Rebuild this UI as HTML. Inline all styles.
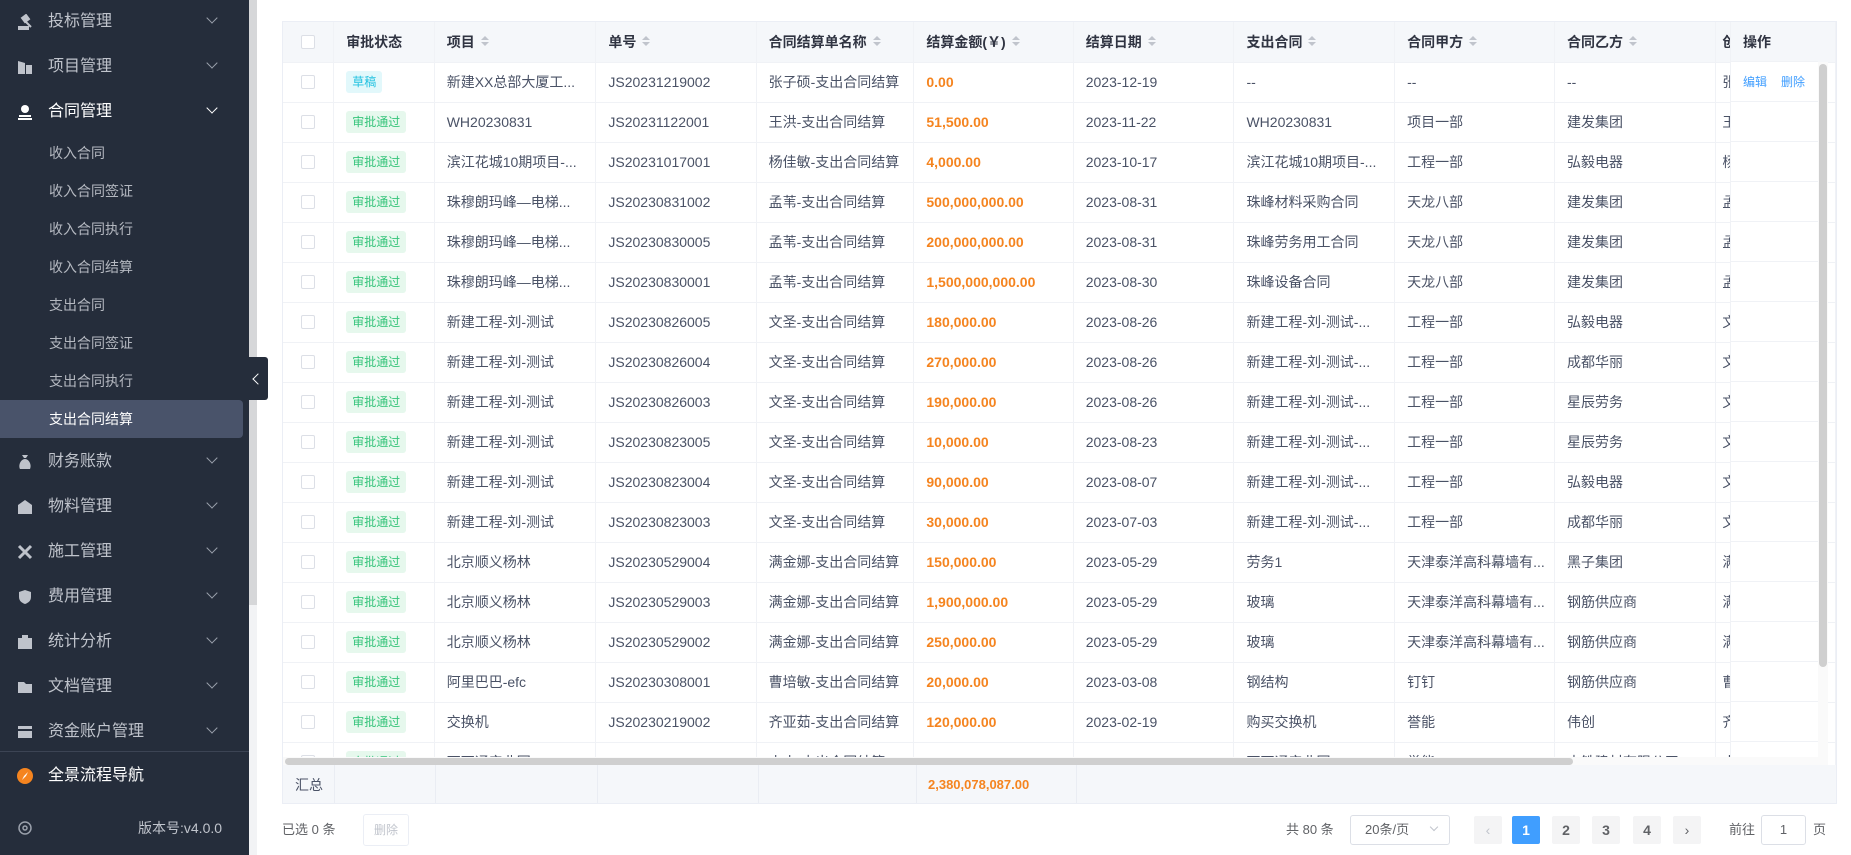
<!DOCTYPE html>
<html><head><meta charset="utf-8"><style>
*{margin:0;padding:0;box-sizing:border-box}
body{width:1851px;height:855px;overflow:hidden;background:#fff;font-family:"Liberation Sans","Noto Sans CJK SC",sans-serif;color:#4a5266;position:relative}
.sb{position:absolute;left:0;top:0;width:249px;height:855px;background:#252d3b}
.sbs{position:absolute;left:249px;top:0;width:8px;height:855px;background:#f2f3f5}
.sbs i{position:absolute;left:0;top:0;width:8px;height:605px;background:#d6d7d9}
.mi{position:absolute;left:0;width:249px;height:44px;color:#c0c4cc;font-size:16px;line-height:44px}
.mi .ic{position:absolute;left:17px;top:14px;width:16px;height:16px}
.mi .t{position:absolute;left:48px}
.mi .ar{position:absolute;left:208px;top:14px;width:8px;height:8px;border-right:1.5px solid #9aa0ab;border-bottom:1.5px solid #9aa0ab;transform:rotate(45deg)}
.sub{position:absolute;left:0;width:243px;height:38px;line-height:38px;padding-left:49px;font-size:14px;color:#b4b8c0}
.sub.on{background:#49536a;color:#fff;border-radius:0 4px 4px 0}
.coll{position:absolute;left:249px;top:357px;width:19px;height:43px;background:#252d3b;border-radius:0 3px 3px 0}
.coll:after{content:"";position:absolute;left:5px;top:18px;width:7px;height:7px;border-left:1.5px solid #fff;border-bottom:1.5px solid #fff;transform:rotate(45deg)}
.tw{position:absolute;left:282px;top:21px;width:1555px;height:783px;border:1px solid #ebeef5;overflow:hidden}
table{border-collapse:collapse;table-layout:fixed;position:absolute;left:0;top:0}
td,th{height:40px;border-right:1px solid #f0f2f6;border-bottom:1px solid #f0f2f6;font-size:14px;padding-left:12px;white-space:nowrap;overflow:hidden;text-align:left}
td:nth-child(11),th:nth-child(11){padding-left:6px}
th{background:#f5f7fa;color:#303442;font-weight:bold;height:40px}
th .s{display:inline-block;width:0;height:0;margin-left:6px;border:4px solid transparent;border-bottom-color:#c0c4cc;position:relative;top:-7px}
th .s:after{content:"";position:absolute;left:-4px;top:6px;border:4px solid transparent;border-top-color:#c0c4cc}
.cb{padding-left:18px}.cb i{display:block;width:14px;height:14px;border:1px solid #dcdfe6;border-radius:2px;background:#fff}
.tg{display:inline-block;height:22px;line-height:22px;padding:0 6px;font-size:12px;border-radius:3px;background:#e6f8ed;color:#35c47a}
.tg.d{background:#e2f8fb;color:#20c1e0}
.am{color:#f5841f;font-weight:bold}
.ops{position:absolute;left:1447px;top:0;width:88px;height:735px;background:#fff;border-left:1px solid #f0f2f6}
.ops div{height:40px;border-bottom:1px solid #f0f2f6;font-size:12px;line-height:40px;padding-left:12px;color:#409eff}
.ops .h{background:#f5f7fa;font-size:14px;font-weight:bold;color:#303442}
.vs{position:absolute;left:1535px;top:40px;width:10px;height:743px;background:#fafafa}
.vs i{position:absolute;left:1px;top:2px;width:8px;height:603px;background:#cfcfcf;border-radius:4px}
.hs{position:absolute;left:0;top:735px;width:1545px;height:8px;background:#fafafa}
.hs i{position:absolute;left:2px;top:1px;width:1288px;height:7px;background:#cfcfcf;border-radius:4px}
.sum{position:absolute;left:0;top:743px;width:1555px;height:40px;background:#f5f7fa;font-size:14px;line-height:40px}
.pg{position:absolute;top:816px;height:28px;line-height:28px;font-size:13px}
.pb{position:absolute;top:816px;width:28px;height:28px;background:#f4f4f5;text-align:center;line-height:28px;font-size:14px;font-weight:bold;color:#606266;border-radius:2px}
</style></head><body>
<div class="sb">
<div class="mi" style="top:0"><svg class="ic" viewBox="0 0 16 16"><path d="M2 13h9v2H2zM5 4l4-3 3 4-4 3zM8 7l6 6" stroke="#bfc3cb" stroke-width="2" fill="#bfc3cb"/></svg><span class="t">投标管理</span><i class="ar"></i></div>
<div class="mi" style="top:45px"><svg class="ic" viewBox="0 0 16 16"><path d="M1 15V2l7 2v11zM9 6h6v9H9z" fill="#bfc3cb"/></svg><span class="t">项目管理</span><i class="ar"></i></div>
<div class="mi" style="top:90px;color:#fff"><svg class="ic" viewBox="0 0 16 16"><circle cx="8" cy="5" r="4" fill="#fff"/><path d="M2 11h12v2H2zM1 14h14v2H1z" fill="#fff"/></svg><span class="t">合同管理</span><i class="ar" style="border-color:#fff"></i></div>
<div class="sub" style="top:134px">收入合同</div>
<div class="sub" style="top:172px">收入合同签证</div>
<div class="sub" style="top:210px">收入合同执行</div>
<div class="sub" style="top:248px">收入合同结算</div>
<div class="sub" style="top:286px">支出合同</div>
<div class="sub" style="top:324px">支出合同签证</div>
<div class="sub" style="top:362px">支出合同执行</div>
<div class="sub on" style="top:400px">支出合同结算</div>
<div class="mi" style="top:440px"><svg class="ic" viewBox="0 0 16 16"><path d="M5 1h6l-2 3h-2zM3 15c-2-4 1-10 5-10s7 6 5 10z" fill="#bfc3cb"/></svg><span class="t">财务账款</span><i class="ar"></i></div>
<div class="mi" style="top:485px"><svg class="ic" viewBox="0 0 16 16"><path d="M1 6l7-5 7 5v9H1z" fill="#bfc3cb"/></svg><span class="t">物料管理</span><i class="ar"></i></div>
<div class="mi" style="top:530px"><svg class="ic" viewBox="0 0 16 16"><path d="M2 2l12 12M14 2L2 14" stroke="#bfc3cb" stroke-width="3"/></svg><span class="t">施工管理</span><i class="ar"></i></div>
<div class="mi" style="top:575px"><svg class="ic" viewBox="0 0 16 16"><path d="M8 1l6 2v5c0 4-3 6-6 7-3-1-6-3-6-7V3z" fill="#bfc3cb"/></svg><span class="t">费用管理</span><i class="ar"></i></div>
<div class="mi" style="top:620px"><svg class="ic" viewBox="0 0 16 16"><path d="M1 4h14v11H1zM5 1h6v3H5z" fill="#bfc3cb"/></svg><span class="t">统计分析</span><i class="ar"></i></div>
<div class="mi" style="top:665px"><svg class="ic" viewBox="0 0 16 16"><path d="M1 3h6l2 2h6v9H1z" fill="#bfc3cb"/></svg><span class="t">文档管理</span><i class="ar"></i></div>
<div class="mi" style="top:710px"><svg class="ic" viewBox="0 0 16 16"><path d="M1 2h14v12H1z" fill="#bfc3cb"/><path d="M1 6h14" stroke="#252d3b" stroke-width="2"/></svg><span class="t">资金账户管理</span><i class="ar"></i></div>
<div style="position:absolute;left:0;top:751px;width:249px;height:1px;background:#3c4454"></div>
<div class="mi" style="top:754px;color:#fff"><svg class="ic" viewBox="0 0 16 16"><circle cx="8" cy="8" r="8" fill="#f5841f"/><path d="M11 4L7 8 5 12 9 8z" fill="#fff"/></svg><span class="t">全景流程导航</span></div>
<div class="mi" style="top:806px;font-size:14px"><svg class="ic" viewBox="0 0 16 16"><circle cx="8" cy="8" r="6" fill="none" stroke="#9aa0ab" stroke-width="1.5"/><circle cx="8" cy="8" r="2" fill="none" stroke="#9aa0ab" stroke-width="1.5"/></svg><span class="t" style="left:138px">版本号:v4.0.0</span></div>
</div>
<div class="sbs"><i></i></div>
<div class="coll"></div>

<div class="tw">
<table>
<colgroup><col style="width:51px"><col style="width:101px"><col style="width:162px"><col style="width:161px"><col style="width:158px"><col style="width:160px"><col style="width:162px"><col style="width:161px"><col style="width:160px"><col style="width:162px"><col style="width:18px"><col style="width:100px"></colgroup>
<tr><th class="cb"><i></i></th><th>审批状态</th><th>项目<span class="s"></span></th><th>单号<span class="s"></span></th><th>合同结算单名称<span class="s"></span></th><th>结算金额(￥)<span class="s"></span></th><th>结算日期<span class="s"></span></th><th>支出合同<span class="s"></span></th><th>合同甲方<span class="s"></span></th><th>合同乙方<span class="s"></span></th><th>创</th><th></th></tr>
<tr><td class="cb"><i></i></td><td><span class="tg d">草稿</span></td><td>新建XX总部大厦工...</td><td>JS20231219002</td><td>张子硕-支出合同结算</td><td class="am">0.00</td><td>2023-12-19</td><td>--</td><td>--</td><td>--</td><td>张</td><td></td></tr>
<tr><td class="cb"><i></i></td><td><span class="tg">审批通过</span></td><td>WH20230831</td><td>JS20231122001</td><td>王洪-支出合同结算</td><td class="am">51,500.00</td><td>2023-11-22</td><td>WH20230831</td><td>项目一部</td><td>建发集团</td><td>王</td><td></td></tr>
<tr><td class="cb"><i></i></td><td><span class="tg">审批通过</span></td><td>滨江花城10期项目-...</td><td>JS20231017001</td><td>杨佳敏-支出合同结算</td><td class="am">4,000.00</td><td>2023-10-17</td><td>滨江花城10期项目-...</td><td>工程一部</td><td>弘毅电器</td><td>杨</td><td></td></tr>
<tr><td class="cb"><i></i></td><td><span class="tg">审批通过</span></td><td>珠穆朗玛峰—电梯...</td><td>JS20230831002</td><td>孟苇-支出合同结算</td><td class="am">500,000,000.00</td><td>2023-08-31</td><td>珠峰材料采购合同</td><td>天龙八部</td><td>建发集团</td><td>孟</td><td></td></tr>
<tr><td class="cb"><i></i></td><td><span class="tg">审批通过</span></td><td>珠穆朗玛峰—电梯...</td><td>JS20230830005</td><td>孟苇-支出合同结算</td><td class="am">200,000,000.00</td><td>2023-08-31</td><td>珠峰劳务用工合同</td><td>天龙八部</td><td>建发集团</td><td>孟</td><td></td></tr>
<tr><td class="cb"><i></i></td><td><span class="tg">审批通过</span></td><td>珠穆朗玛峰—电梯...</td><td>JS20230830001</td><td>孟苇-支出合同结算</td><td class="am">1,500,000,000.00</td><td>2023-08-30</td><td>珠峰设备合同</td><td>天龙八部</td><td>建发集团</td><td>孟</td><td></td></tr>
<tr><td class="cb"><i></i></td><td><span class="tg">审批通过</span></td><td>新建工程-刘-测试</td><td>JS20230826005</td><td>文圣-支出合同结算</td><td class="am">180,000.00</td><td>2023-08-26</td><td>新建工程-刘-测试-...</td><td>工程一部</td><td>弘毅电器</td><td>文</td><td></td></tr>
<tr><td class="cb"><i></i></td><td><span class="tg">审批通过</span></td><td>新建工程-刘-测试</td><td>JS20230826004</td><td>文圣-支出合同结算</td><td class="am">270,000.00</td><td>2023-08-26</td><td>新建工程-刘-测试-...</td><td>工程一部</td><td>成都华丽</td><td>文</td><td></td></tr>
<tr><td class="cb"><i></i></td><td><span class="tg">审批通过</span></td><td>新建工程-刘-测试</td><td>JS20230826003</td><td>文圣-支出合同结算</td><td class="am">190,000.00</td><td>2023-08-26</td><td>新建工程-刘-测试-...</td><td>工程一部</td><td>星辰劳务</td><td>文</td><td></td></tr>
<tr><td class="cb"><i></i></td><td><span class="tg">审批通过</span></td><td>新建工程-刘-测试</td><td>JS20230823005</td><td>文圣-支出合同结算</td><td class="am">10,000.00</td><td>2023-08-23</td><td>新建工程-刘-测试-...</td><td>工程一部</td><td>星辰劳务</td><td>文</td><td></td></tr>
<tr><td class="cb"><i></i></td><td><span class="tg">审批通过</span></td><td>新建工程-刘-测试</td><td>JS20230823004</td><td>文圣-支出合同结算</td><td class="am">90,000.00</td><td>2023-08-07</td><td>新建工程-刘-测试-...</td><td>工程一部</td><td>弘毅电器</td><td>文</td><td></td></tr>
<tr><td class="cb"><i></i></td><td><span class="tg">审批通过</span></td><td>新建工程-刘-测试</td><td>JS20230823003</td><td>文圣-支出合同结算</td><td class="am">30,000.00</td><td>2023-07-03</td><td>新建工程-刘-测试-...</td><td>工程一部</td><td>成都华丽</td><td>文</td><td></td></tr>
<tr><td class="cb"><i></i></td><td><span class="tg">审批通过</span></td><td>北京顺义杨林</td><td>JS20230529004</td><td>满金娜-支出合同结算</td><td class="am">150,000.00</td><td>2023-05-29</td><td>劳务1</td><td>天津泰洋高科幕墙有...</td><td>黑子集团</td><td>满</td><td></td></tr>
<tr><td class="cb"><i></i></td><td><span class="tg">审批通过</span></td><td>北京顺义杨林</td><td>JS20230529003</td><td>满金娜-支出合同结算</td><td class="am">1,900,000.00</td><td>2023-05-29</td><td>玻璃</td><td>天津泰洋高科幕墙有...</td><td>钢筋供应商</td><td>满</td><td></td></tr>
<tr><td class="cb"><i></i></td><td><span class="tg">审批通过</span></td><td>北京顺义杨林</td><td>JS20230529002</td><td>满金娜-支出合同结算</td><td class="am">250,000.00</td><td>2023-05-29</td><td>玻璃</td><td>天津泰洋高科幕墙有...</td><td>钢筋供应商</td><td>满</td><td></td></tr>
<tr><td class="cb"><i></i></td><td><span class="tg">审批通过</span></td><td>阿里巴巴-efc</td><td>JS20230308001</td><td>曹培敏-支出合同结算</td><td class="am">20,000.00</td><td>2023-03-08</td><td>钢结构</td><td>钉钉</td><td>钢筋供应商</td><td>曹</td><td></td></tr>
<tr><td class="cb"><i></i></td><td><span class="tg">审批通过</span></td><td>交换机</td><td>JS20230219002</td><td>齐亚茹-支出合同结算</td><td class="am">120,000.00</td><td>2023-02-19</td><td>购买交换机</td><td>誉能</td><td>伟创</td><td>齐</td><td></td></tr>
<tr><td class="cb"><i></i></td><td><span class="tg">审批通过</span></td><td>西西通产业园</td><td>JS20230217003</td><td>小小-支出合同结算</td><td class="am">100,000.00</td><td>2023-02-17</td><td>西西通产业园</td><td>誉能</td><td>中铁建材有限公司</td><td>小</td><td></td></tr>
</table>
<div class="ops"><div class="h">操作</div><div><span>编辑</span><span style="margin-left:14px">删除</span></div><div></div><div></div><div></div><div></div><div></div><div></div><div></div><div></div><div></div><div></div><div></div><div></div><div></div><div></div><div></div><div></div></div>
<div class="vs"><i></i></div>
<div class="hs"><i></i></div>
<div class="sum"><span style="position:absolute;left:12px">汇总</span><span style="position:absolute;left:645px;color:#f5841f;font-weight:bold;font-size:13px">2,380,078,087.00</span>
<i style="position:absolute;left:51px;top:0;width:1px;height:40px;background:#eaedf3"></i><i style="position:absolute;left:152px;top:0;width:1px;height:40px;background:#eaedf3"></i><i style="position:absolute;left:314px;top:0;width:1px;height:40px;background:#eaedf3"></i><i style="position:absolute;left:475px;top:0;width:1px;height:40px;background:#eaedf3"></i><i style="position:absolute;left:633px;top:0;width:1px;height:40px;background:#eaedf3"></i><i style="position:absolute;left:793px;top:0;width:1px;height:40px;background:#eaedf3"></i></div>
</div>

<div class="pg" style="left:282px;color:#606266">已选 0 条</div>
<div class="pg" style="left:363px;width:46px;border:1px solid #ebeef5;border-radius:3px;text-align:center;color:#c0c4cc;font-size:12px;height:32px;top:814px;line-height:30px">删除</div>
<div class="pg" style="left:1286px;color:#606266">共 80 条</div>
<div class="pg" style="left:1350px;width:100px;height:30px;top:815px;border:1px solid #dcdfe6;border-radius:3px;padding-left:14px;color:#606266">20条/页<span style="position:absolute;right:12px;top:8px;width:6px;height:6px;border-right:1px solid #c0c4cc;border-bottom:1px solid #c0c4cc;transform:rotate(45deg)"></span></div>
<div class="pb" style="left:1474px;color:#c0c4cc;font-weight:normal">‹</div>
<div class="pb" style="left:1512px;background:#409eff;color:#fff">1</div>
<div class="pb" style="left:1552px">2</div>
<div class="pb" style="left:1592px">3</div>
<div class="pb" style="left:1633px">4</div>
<div class="pb" style="left:1673px;font-weight:normal">›</div>
<div class="pg" style="left:1729px;color:#606266">前往</div>
<div class="pg" style="left:1761px;width:45px;height:30px;top:815px;border:1px solid #dcdfe6;border-radius:3px;text-align:center;color:#606266">1</div>
<div class="pg" style="left:1813px;color:#606266">页</div>
</body></html>
